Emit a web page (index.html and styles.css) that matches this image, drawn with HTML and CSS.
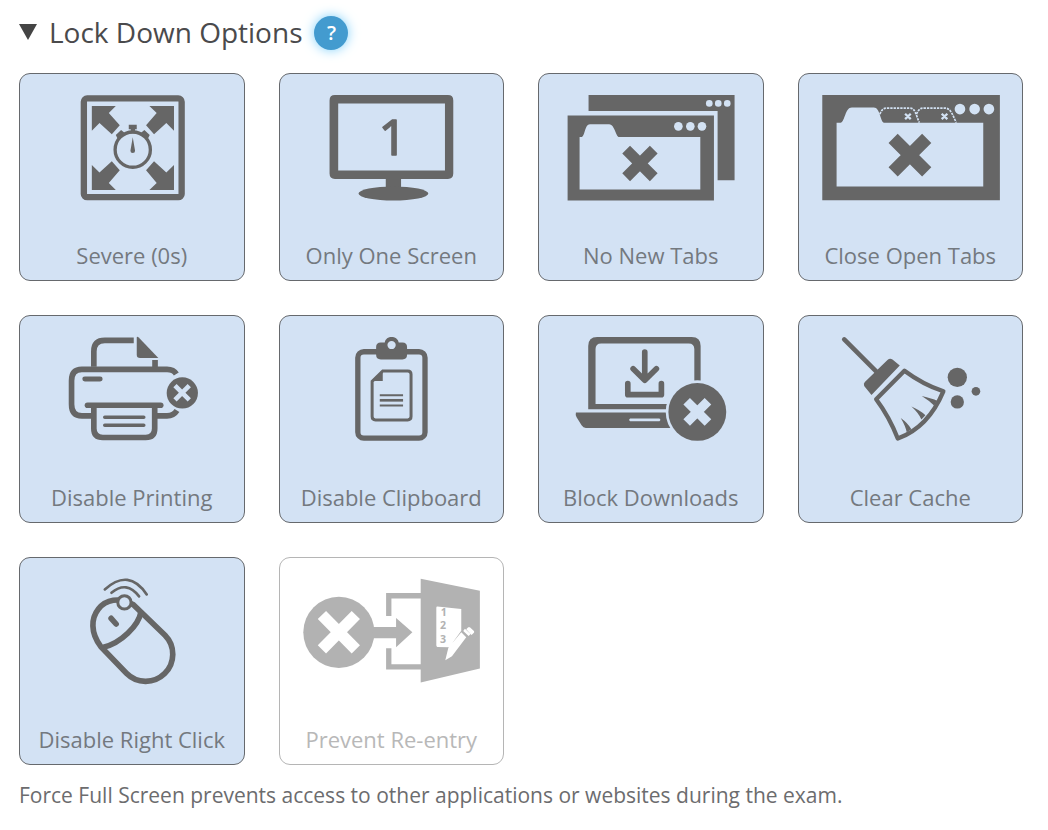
FILE: index.html
```html
<!DOCTYPE html>
<html lang="en">
<head>
    <meta charset="UTF-8">
    <meta name="viewport" content="width=device-width, initial-scale=1.0">
    <title>Lock Down Options</title>
    <link rel="stylesheet" href="styles.css">
</head>
<body>
    <header class="section-header">
        <h2 class="section-title">
            <button type="button" class="toggle" aria-expanded="true">
                <svg class="arrow" viewBox="0 0 18 16" aria-hidden="true"><path d="M0 0h18L9 16z"/></svg>
                Lock Down Options
            </button>
        </h2>
        <button type="button" class="help" aria-label="Help">?</button>
    </header>

    <main class="options">
        <button type="button" class="option" aria-pressed="true">
            <svg class="icon" viewBox="30 27 672 408" aria-hidden="true">
                <rect class="line" x="222" y="100" width="294" height="297" rx="10" stroke-width="19"/>
                <path d="M246 123h72l-21 21 33 37-24 27-37-34-23 23zM493 123h-74l22 21-32 37 24 27 37-34 23 23zM246 375h72l-21-21 33-38-24-27-37 34-23-23zM493 375h-74l22-21-32-38 24-27 37 34 23-23z"/>
                <circle class="hole" cx="369" cy="254" r="64"/>
                <circle class="line" cx="369" cy="254" r="53" stroke-width="10"/>
                <path d="M357 179h24v14h-5v12h-13v-12h-6zM318 210l16-15 11 9-20 20zM420 210l-16-15-11 9 20 20zM369 217l7 40a7 7 0 1 1-14 0z"/>
            </svg>
            <span class="label">Severe (0s)</span>
        </button>

        <button type="button" class="option" aria-pressed="true">
            <svg class="icon" viewBox="30 27 672 408" aria-hidden="true">
                <path fill-rule="evenodd" d="M195 90h340q16 0 16 16v220q0 16-16 16H195q-16 0-16-16V106q0-16 16-16zM205 115v202h321V115z"/>
                <path d="M348 340h46v30h-46z"/>
                <ellipse cx="371" cy="386" rx="105" ry="21"/>
                <text class="digit" x="369" y="269" text-anchor="middle">1</text>
            </svg>
            <span class="label">Only One Screen</span>
        </button>

        <button type="button" class="option" aria-pressed="true">
            <svg class="icon" viewBox="27 27 672 408" aria-hidden="true">
                <path d="M176 90h439v256h-51V138H176z"/>
                <path fill-rule="evenodd" d="M113 151h440v256H113zM149 216v158h363V216H266c-9-4-12-38-28-38h-58c-16 0-14 34-24 38z"/>
                <g class="hole">
                    <circle cx="539" cy="115" r="10"/><circle cx="566" cy="115" r="10"/><circle cx="593" cy="115" r="10"/>
                    <circle cx="446" cy="184" r="13"/><circle cx="482" cy="184" r="13"/><circle cx="517" cy="184" r="13"/>
                </g>
                <path class="line" stroke-width="33" d="M289 254l83 83M372 254l-83 83"/>
            </svg>
            <span class="label">No New Tabs</span>
        </button>

        <button type="button" class="option" aria-pressed="true">
            <svg class="icon" viewBox="26 27 672 408" aria-hidden="true">
                <path fill-rule="evenodd" d="M96 90h534v316H96zM139 173v192h441V173H281c-11-5-11-46-30-46h-66c-21 0-20 42-34 46z"/>
                <g class="hole">
                    <circle cx="510" cy="132" r="16"/><circle cx="554" cy="132" r="16"/><circle cx="597" cy="132" r="16"/>
                </g>
                <g class="hole-line" stroke-width="5" stroke-dasharray="7 3">
                    <path d="M269 147c7-15 11-18 24-18h66c17 0 18 20 29 44"/>
                    <path d="M379 147c8-15 11-18 25-18h61c18 0 24 24 34 44"/>
                </g>
                <path class="hole-line" stroke-width="7" d="M345 146l17 16M362 146l-17 16M455 146l17 16M472 146l-17 16"/>
                <path class="line" stroke-width="39" d="M309 220l101 101M410 220L309 321"/>
            </svg>
            <span class="label">Close Open Tabs</span>
        </button>

        <button type="button" class="option" aria-pressed="true">
            <svg class="icon" viewBox="30 18 672 408" aria-hidden="true">
                <g class="line" stroke-width="17">
                    <path d="M252 170v-46q0-33 33-33h87M436 150v24"/>
                    <path d="M500 192q-8-14-28-14H216q-31 0-31 34v71q0 35 31 35h33M439 318h33q20 0 30-16"/>
                    <path d="M252 290v66q0 27 27 27h129q27 0 27-27v-66"/>
                </g>
                <g class="line round">
                    <path stroke-width="17" d="M233 286h220"/>
                    <path stroke-width="15" d="M225 207h46"/>
                    <path stroke-width="11" d="M285 322h117M285 346h117"/>
                </g>
                <path d="M381 83q0-6 6-1l59 62h-55q-10 0-10-10z"/>
                <circle cx="518" cy="249" r="47"/>
                <path class="hole-line" stroke-width="14" d="M496 227l43 43M539 227l-43 43"/>
            </svg>
            <span class="label">Disable Printing</span>
        </button>

        <button type="button" class="option" aria-pressed="true">
            <svg class="icon" viewBox="30 18 672 408" aria-hidden="true">
                <rect class="line" x="264" y="125" width="202" height="260" rx="18" stroke-width="16"/>
                <path fill-rule="evenodd" d="M333 97h12c3-22 38-22 42 0h11q14 0 14 14v23q0 14-14 14h-65q-14 0-14-14v-23q0-14 14-14zM353 105a12 12 0 1 0 25 0a12 12 0 1 0-25 0z"/>
                <path class="line" stroke-width="9" d="M339 183h75q10 0 10 10v127q0 10-10 10h-97q-10 0-10-10V214z"/>
                <path d="M339 180v33h-33z"/>
                <path class="line" stroke-width="6" d="M330 256h70M330 287h70"/>
                <path class="line" stroke-width="8" d="M330 271h70"/>
            </svg>
            <span class="label">Disable Clipboard</span>
        </button>

        <button type="button" class="option" aria-pressed="true">
            <svg class="icon" viewBox="27 18 672 408" aria-hidden="true">
                <path fill-rule="evenodd" d="M202 81h284q27 0 27 27v190H175V108q0-27 27-27zM214 100q-17 0-17 17v165h297V117q0-17-17-17z"/>
                <path fill-rule="evenodd" d="M138 308h300v46H168q-8 0-13-8l-15-24q-4-8-2-14zM301 326q-6 4 0 8h88q6-4 0-8z"/>
                <g class="line round" stroke-width="17">
                    <path d="M345 126v84M310 176l35 35 35-35"/>
                    <path d="M294 221v33h101v-33"/>
                </g>
                <circle class="hole" cx="503" cy="306" r="95"/>
                <circle cx="503" cy="306" r="87"/>
                <path class="hole-line" stroke-width="28" d="M471 274l64 64M535 274l-64 64"/>
            </svg>
            <span class="label">Block Downloads</span>
        </button>

        <button type="button" class="option" aria-pressed="true">
            <svg class="icon" viewBox="26 18 672 408" aria-hidden="true">
                <path class="line round" stroke-width="14" d="M162 88l96 96"/>
                <path d="M292 150q7-7 15-2l22 18-85 89-22-27q-3-7 2-12z"/>
                <path class="line" stroke-width="13" stroke-linejoin="round" d="M343 182q55 41 117 62-45 108-137 142-26-66-65-118z"/>
                <path d="M395 258q32 8 46 14l-9 15q-14-15-37-29zM364 290q26 11 42 26l-12 13q-8-19-30-39zM332 324q22 16 32 34l-14 9q-4-19-18-43z"/>
                <circle cx="502" cy="202" r="29"/><circle cx="502" cy="276" r="20"/><circle cx="558" cy="244" r="13"/>
            </svg>
            <span class="label">Clear Cache</span>
        </button>

        <button type="button" class="option" aria-pressed="true">
            <svg class="icon" viewBox="30 24 672 408" aria-hidden="true">
                <g class="line" stroke-width="17">
                    <path d="M273 290C209 206 285 114 371 164L466 256A79 79 0 0 1 350 370z"/>
                    <path d="M281 292C332 280 387 228 394 184"/>
                </g>
                <path class="line round" stroke-width="17" d="M304 205l15 17"/>
                <circle class="hole" cx="344" cy="157" r="20"/>
                <circle class="line" cx="344" cy="157" r="20" stroke-width="9"/>
                <path class="line round" stroke-width="8" d="M305 128q46-38 83 11M285 118q72-65 126 15"/>
            </svg>
            <span class="label">Disable Right Click</span>
        </button>

        <button type="button" class="option option-off" aria-pressed="false">
            <svg class="icon" viewBox="30 24 672 408" aria-hidden="true">
                <circle cx="207" cy="247" r="107"/>
                <path class="hole-line" stroke-width="35" d="M156 195l102 103M258 195L156 298"/>
                <path d="M308 231h71v-27l49 43-49 45v-27h-71z"/>
                <path class="line" stroke-width="16" d="M357 198v-61h100M357 295v56h100"/>
                <path d="M453 86l178 36v234l-178 42z"/>
                <path class="hole" d="M503 169l72 8v65l-36 50-36-1q-3-1-3-5V173q0-4 3-4zM527 331l9-37 39-47 15 15-43 57zM581 243l5-7 17 16-6 6zM590 238l6-6q3-1 5 0l12 11q2 3 0 5l-7 7z"/>
                <g class="list">
                    <text x="513" y="198">1</text>
                    <text x="511" y="238">2</text>
                    <text x="511" y="279">3</text>
                </g>
            </svg>
            <span class="label">Prevent Re-entry</span>
        </button>
    </main>

    <p class="note">Force Full Screen prevents access to other applications or websites during the exam.</p>
</body>
</html>
```
FILE: styles.css
```css
* {
    box-sizing: border-box;
}

body {
    margin: 0;
    padding: 12px 25px 12px 19px;
    background: #fff;
    color: #6b6e72;
    font-family: "Open Sans", "Noto Sans", sans-serif;
}

button {
    font-family: inherit;
    cursor: pointer;
}

.section-header {
    display: flex;
    align-items: center;
    gap: 12px;
    margin-bottom: 19px;
}

.section-title {
    margin: 0;
}

.toggle {
    display: flex;
    align-items: center;
    gap: 12px;
    padding: 0 0 2px;
    border: none;
    background: none;
    color: #4a4a4c;
    font-size: 28px;
    line-height: 40px;
}

.arrow {
    width: 18px;
    height: 16px;
    fill: #444;
}

.help {
    width: 34px;
    height: 34px;
    padding: 0;
    border: none;
    border-radius: 50%;
    background: #439bcf;
    box-shadow: 0 0 12px #7fd0fa;
    color: #fff;
    font-size: 20px;
    font-weight: 600;
    line-height: 34px;
}

.options {
    display: grid;
    grid-template-columns: repeat(4, 1fr);
    gap: 34px;
}

.option {
    --card: #d3e2f4;
    display: flex;
    flex-direction: column;
    padding: 0 0 9px;
    border: 1px solid #66696d;
    border-radius: 11px;
    background: var(--card);
    color: #666;
}

.option-off {
    --card: #fff;
    border-color: #b5b5b5;
    color: #b2b2b2;
}

.icon {
    display: block;
    width: 100%;
    height: 136px;
    margin-bottom: 29px;
    fill: currentColor;
}

.line {
    fill: none;
    stroke: currentColor;
}

.round {
    stroke-linecap: round;
    stroke-linejoin: round;
}

.hole {
    fill: var(--card);
}

.hole-line {
    fill: none;
    stroke: var(--card);
}

.digit {
    font-size: 150px;
    stroke: currentColor;
    stroke-width: 5px;
    stroke-linejoin: round;
}

.list {
    font-size: 32px;
    font-weight: 700;
}

.label {
    width: 100%;
    color: #74797f;
    font-size: 22px;
    line-height: 32px;
    text-align: center;
    white-space: nowrap;
}

.option-off .label {
    color: #b8b8b8;
}

.note {
    margin: 14px 0 0;
    color: #6c6c6e;
    font-size: 21px;
    line-height: 32px;
}
```
